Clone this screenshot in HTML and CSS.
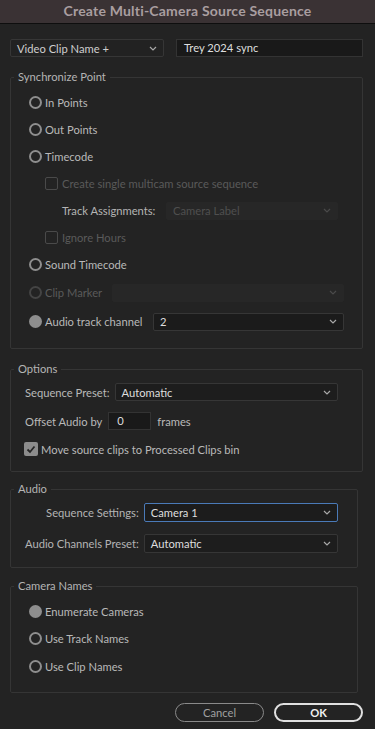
FILE: index.html
```html
<!DOCTYPE html>
<html lang="en">
<head>
    <meta charset="UTF-8">
    <meta name="viewport" content="width=device-width, initial-scale=1.0">
    <title>Create Multi-Camera Source Sequence</title>
    <link rel="stylesheet" href="styles.css">
</head>
<body>
    <div class="titlebar">Create Multi-Camera Source Sequence</div>

    <div class="dialog">
        <div class="top-row">
            <div class="select name-select">
                <span>Video Clip Name +</span>
                <svg class="chev" width="8" height="5" viewBox="0 0 8 5"><path d="M1 1 L4 4 L7 1" /></svg>
            </div>
            <div class="text-input">Trey 2024 sync</div>
        </div>

        <fieldset class="group sync">
            <legend>Synchronize Point</legend>
            <div class="inner">
                <div class="row"><span class="radio"></span><span>In Points</span></div>
                <div class="row"><span class="radio"></span><span>Out Points</span></div>
                <div class="row"><span class="radio"></span><span>Timecode</span></div>
                <div class="row sub disabled"><span class="check"></span><span>Create single multicam source sequence</span></div>
                <div class="row sub track-row">
                    <span class="track-label">Track Assignments:</span>
                    <div class="select disabled-select track-select">
                        <span>Camera Label</span>
                        <svg class="chev" width="8" height="5" viewBox="0 0 8 5"><path d="M1 1 L4 4 L7 1" /></svg>
                    </div>
                </div>
                <div class="row sub disabled"><span class="check"></span><span>Ignore Hours</span></div>
                <div class="row"><span class="radio"></span><span>Sound Timecode</span></div>
                <div class="row tall disabled">
                    <span class="radio"></span><span class="clip-label">Clip Marker</span>
                    <div class="select disabled-select marker-select">
                        <span></span>
                        <svg class="chev" width="8" height="5" viewBox="0 0 8 5"><path d="M1 1 L4 4 L7 1" /></svg>
                    </div>
                </div>
                <div class="row tall">
                    <span class="radio on"></span><span class="channel-label">Audio track channel</span>
                    <div class="select channel-select">
                        <span>2</span>
                        <svg class="chev" width="8" height="5" viewBox="0 0 8 5"><path d="M1 1 L4 4 L7 1" /></svg>
                    </div>
                </div>
            </div>
        </fieldset>

        <fieldset class="group options">
            <legend>Options</legend>
            <div class="inner">
                <div class="opt-row preset-row">
                    <span>Sequence Preset:</span>
                    <div class="select preset-select">
                        <span>Automatic</span>
                        <svg class="chev" width="8" height="5" viewBox="0 0 8 5"><path d="M1 1 L4 4 L7 1" /></svg>
                    </div>
                </div>
                <div class="opt-row offset-row">
                    <span>Offset Audio by</span>
                    <div class="text-input offset">0</div>
                    <span>frames</span>
                </div>
                <div class="opt-row move-row">
                    <span class="check checked">
                        <svg width="10" height="9" viewBox="0 0 10 9"><path d="M1.5 4.5 L4 7 L8.5 1.5" /></svg>
                    </span>
                    <span>Move source clips to Processed Clips bin</span>
                </div>
            </div>
        </fieldset>

        <fieldset class="group audio narrow">
            <legend>Audio</legend>
            <div class="inner audio-grid">
                <span class="right">Sequence Settings:</span>
                <div class="select focus">
                    <span>Camera 1</span>
                    <svg class="chev" width="8" height="5" viewBox="0 0 8 5"><path d="M1 1 L4 4 L7 1" /></svg>
                </div>
                <span class="right">Audio Channels Preset:</span>
                <div class="select">
                    <span>Automatic</span>
                    <svg class="chev" width="8" height="5" viewBox="0 0 8 5"><path d="M1 1 L4 4 L7 1" /></svg>
                </div>
            </div>
        </fieldset>

        <fieldset class="group cameras narrow">
            <legend>Camera Names</legend>
            <div class="inner">
                <div class="row"><span class="radio on"></span><span>Enumerate Cameras</span></div>
                <div class="row"><span class="radio"></span><span>Use Track Names</span></div>
                <div class="row last"><span class="radio"></span><span>Use Clip Names</span></div>
            </div>
        </fieldset>

        <div class="buttons">
            <button class="btn cancel">Cancel</button>
            <button class="btn ok">OK</button>
        </div>
    </div>
</body>
</html>
```

FILE: styles.css
```css
body {
    margin: 0;
    background-color: #232323;
    font-family: Lato, "Liberation Sans", sans-serif;
    font-size: 11.2px;
    color: #b9b9b9;
    width: 375px;
    height: 729px;
    overflow: hidden;
}

.titlebar {
    height: 23px;
    line-height: 21px;
    background-color: #3a3234;
    border-bottom: 1px solid #0e0e0e;
    text-align: center;
    font-size: 14px;
    font-weight: bold;
    color: #a99ea0;
    letter-spacing: 0.2px;
}

.dialog {
    padding: 15px 12px 0 10px;
}

.top-row {
    display: flex;
    gap: 12px;
    height: 18px;
}

.select {
    display: flex;
    align-items: center;
    justify-content: space-between;
    box-sizing: border-box;
    height: 18px;
    padding: 0 6px 0 6px;
    background-color: #1d1d1d;
    border: 1px solid #363636;
    border-radius: 2px;
    color: #dedede;
}

.chev {
    fill: none;
    stroke: #a8a8a8;
    stroke-width: 1.2;
}

.name-select {
    width: 154px;
    background-color: #222;
    color: #cfcfcf;
}

.text-input {
    flex: 1;
    box-sizing: border-box;
    height: 18px;
    line-height: 16px;
    padding-left: 7px;
    background-color: #191919;
    border: 1px solid #333;
    color: #dedede;
}

/* fieldset groups */
.group {
    margin: 13px 0 0 0;
    padding: 0;
    border: 1px solid #353535;
    border-radius: 2px;
    min-width: 0;
}

.group legend {
    margin-left: 3px;
    padding: 0 4px;
    color: #b4b4b4;
    line-height: 14px;
}

.group.narrow {
    margin-right: 5px;
}

.sync .inner {
    padding: 5px 0 12px 18px;
}

.row {
    display: flex;
    align-items: center;
    height: 27px;
    gap: 3px;
}

.row.tall {
    height: 29px;
}

.row.sub {
    padding-left: 16px;
    gap: 4px;
}

.row.track-row {
    padding-left: 33px;
}

.radio {
    box-sizing: border-box;
    width: 13px;
    height: 13px;
    border: 2px solid #8e8e8e;
    border-radius: 50%;
    flex: none;
}

.radio.on {
    background-color: #8e8e8e;
}

.check {
    box-sizing: border-box;
    width: 13px;
    height: 13px;
    border: 1.5px solid #4a4a4a;
    border-radius: 2px;
    flex: none;
}

.disabled {
    color: #5a5a5a;
}

.disabled .radio {
    border-color: #444;
}

.track-label {
    color: #b4b4b4;
    width: 100px;
    flex: none;
}

.disabled-select {
    background-color: #272727;
    border-color: #272727;
    color: #4f4f4f;
}

.disabled-select .chev {
    stroke: #4a4a4a;
}

.track-select {
    width: 172px;
}

.clip-label {
    width: 64px;
    flex: none;
}

.marker-select {
    width: 232px;
}

.channel-label {
    width: 105px;
    flex: none;
}

.channel-select {
    width: 191px;
    background-color: #1b1b1b;
}

.options .inner {
    padding: 2px 24px 9px 14px;
}

.opt-row {
    display: flex;
    align-items: center;
    gap: 6px;
}

.preset-row {
    height: 28px;
    gap: 5px;
}

.offset-row {
    height: 30px;
}

.move-row {
    height: 26px;
    margin-left: -1px;
}

.preset-select {
    flex: 1;
}

.text-input.offset {
    flex: none;
    width: 43px;
    padding-left: 8px;
}

.check.checked {
    width: 14px;
    height: 14px;
    border: none;
    background-color: #8c8c8c;
    display: flex;
    align-items: center;
    justify-content: center;
    margin-right: -3px;
}

.check.checked svg {
    fill: none;
    stroke: #262626;
    stroke-width: 1.8;
}

.audio {
    margin-top: 10px;
}

.audio-grid {
    display: grid;
    grid-template-columns: auto 1fr;
    column-gap: 5px;
    row-gap: 12px;
    align-items: center;
    padding: 7px 19px 14px 14px;
}

.audio-grid .select {
    height: 19px;
}

.right {
    text-align: right;
    color: #b4b4b4;
}

.select.focus {
    border-color: #4a7ab8;
    background-color: #1c1c1c;
}

.cameras {
    margin-top: 11px;
}

.cameras .inner {
    padding: 5px 0 12px 18px;
}

.row.last {
    height: 28px;
}

.buttons {
    display: flex;
    justify-content: flex-end;
    gap: 10px;
    margin-top: 10px;
}

.btn {
    width: 89px;
    height: 19px;
    border-radius: 10px;
    background: transparent;
    font-family: Lato, "Liberation Sans", sans-serif;
    font-size: 11.2px;
    padding: 0;
}

.cancel {
    border: 1.5px solid #8a8a8a;
    color: #a0a0a0;
}

.ok {
    border: 2px solid #e0e0e0;
    color: #f0f0f0;
    font-weight: bold;
}
```
